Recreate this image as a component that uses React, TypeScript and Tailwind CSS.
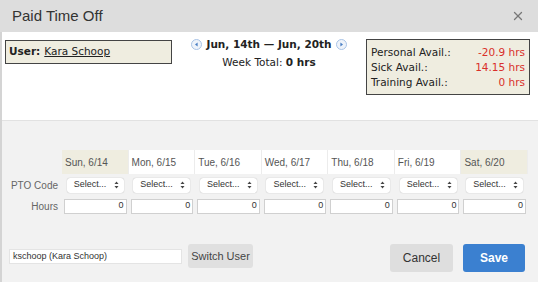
import React from 'react';
import { X } from 'lucide-react';

const days = [
  { label: 'Sun, 6/14', weekend: true },
  { label: 'Mon, 6/15', weekend: false },
  { label: 'Tue, 6/16', weekend: false },
  { label: 'Wed, 6/17', weekend: false },
  { label: 'Thu, 6/18', weekend: false },
  { label: 'Fri, 6/19', weekend: false },
  { label: 'Sat, 6/20', weekend: true },
];

const balances = [
  { name: 'Personal Avail.:', value: '-20.9 hrs' },
  { name: 'Sick Avail.:', value: '14.15 hrs' },
  { name: 'Training Avail.:', value: '0 hrs' },
];

function ArrowButton({ dir }: { dir: 'left' | 'right' }) {
  return (
    <svg width="11" height="11" viewBox="0 0 11 11" className="shrink-0">
      <circle cx="5.5" cy="5.5" r="5" fill="#eef3fa" stroke="#a9c3e6" strokeWidth="1" />
      {dir === 'left' ? (
        <path d="M6.6 3.4 L4 5.5 L6.6 7.6 Z" fill="#4a7fc4" />
      ) : (
        <path d="M4.4 3.4 L7 5.5 L4.4 7.6 Z" fill="#4a7fc4" />
      )}
    </svg>
  );
}

function SelectBox() {
  return (
    <div className="mx-auto flex h-[15px] w-[57px] items-center justify-between rounded-[3px] bg-white pl-[7px] pr-[5px] text-[9px] text-[#333] shadow-[0_0_1px_rgba(0,0,0,0.35)]">
      <span>Select...</span>
      <svg width="5" height="8" viewBox="0 0 5 8">
        <path d="M2.5 0.5 L4.5 3 L0.5 3 Z" fill="#444" />
        <path d="M2.5 7.5 L4.5 5 L0.5 5 Z" fill="#444" />
      </svg>
    </div>
  );
}

export default function App() {
  return (
    <div className="flex h-[282px] w-[538px] flex-col overflow-hidden bg-[#f2f2f2] font-['Liberation_Sans',Arial,sans-serif]">
      {/* Title bar */}
      <div className="flex h-[32px] shrink-0 items-center justify-between bg-[#dddddd] pl-[12px] pr-[13px]">
        <span className="text-[15px] text-[#333]">Paid Time Off</span>
        <X className="h-[14px] w-[14px] text-[#777]" strokeWidth={2.25} />
      </div>

      <div className="flex flex-1 flex-col border-l-2 border-[#d4d4d4]">
        {/* Summary section */}
        <div className="flex h-[89px] shrink-0 items-start border-b border-[#e2e2e2] bg-white font-['DejaVu_Sans',Verdana,sans-serif]">
          <div className="ml-[3px] mt-[8px] flex h-[24px] w-[167px] items-center border border-[#444] bg-[#efede0] px-[3px] text-[10.5px] text-[#222]">
            <span className="font-bold">User:</span>
            <span className="ml-[4px] underline">Kara Schoop</span>
          </div>

          <div className="mt-[5px] flex flex-1 flex-col items-center text-[10.5px] text-[#222]">
            <div className="flex items-center gap-[4px]">
              <ArrowButton dir="left" />
              <span className="font-bold">Jun, 14th — Jun, 20th</span>
              <ArrowButton dir="right" />
            </div>
            <div className="mt-[2px]">
              Week Total: <span className="font-bold">0 hrs</span>
            </div>
          </div>

          <div className="mr-[8px] mt-[7px] flex h-[56px] w-[164px] flex-col justify-center border border-[#444] bg-[#efede0] px-[4px] text-[10.5px] leading-[15px]">
            {balances.map((b) => (
              <div key={b.name} className="flex justify-between">
                <span className="text-[#222]">{b.name}</span>
                <span className="text-[#d9302a]">{b.value}</span>
              </div>
            ))}
          </div>
        </div>

        {/* Day grid */}
        <div className="mt-[29px] grid grid-cols-[60px_repeat(7,1fr)] pr-[10px] text-[10px]">
          <div />
          {days.map((d) => (
            <div
              key={d.label}
              className={`flex h-[24px] items-center border-r border-[#ececec] px-[3px] text-[#555] ${
                d.weekend ? 'bg-[#efede0]' : 'bg-white'
              }`}
            >
              {d.label}
            </div>
          ))}

          <div className="flex h-[22px] items-center justify-end pr-[4px] text-[#666]">PTO Code</div>
          {days.map((d) => (
            <div key={d.label} className="flex h-[22px] items-center">
              <SelectBox />
            </div>
          ))}

          <div className="flex h-[20px] items-center justify-end pr-[4px] text-[#666]">Hours</div>
          {days.map((d) => (
            <div key={d.label} className="flex h-[20px] items-center px-[2px]">
              <div className="flex h-[15px] w-full items-center justify-end border border-[#d0d0d0] bg-white pr-[2px] text-[9px] text-[#333]">
                0
              </div>
            </div>
          ))}
        </div>

        {/* Footer */}
        <div className="mt-[28px] flex items-start pl-[7px] pr-[13px]">
          <div className="mt-[5px] flex h-[15px] w-[173px] items-center border border-[#e4e4e4] bg-white pl-[3px] text-[9px] text-[#333]">
            kschoop (Kara Schoop)
          </div>
          <button className="ml-[6px] h-[24px] w-[65px] rounded-[3px] bg-[#e0e0e0] text-[11px] text-[#444]">
            Switch User
          </button>
          <div className="flex-1" />
          <button className="h-[28px] w-[63px] rounded-[3px] bg-[#dedede] text-[12px] text-[#333]">Cancel</button>
          <button className="ml-[10px] h-[28px] w-[62px] rounded-[3px] bg-[#3b80d0] text-[12px] font-bold text-white">
            Save
          </button>
        </div>
      </div>
    </div>
  );
}
